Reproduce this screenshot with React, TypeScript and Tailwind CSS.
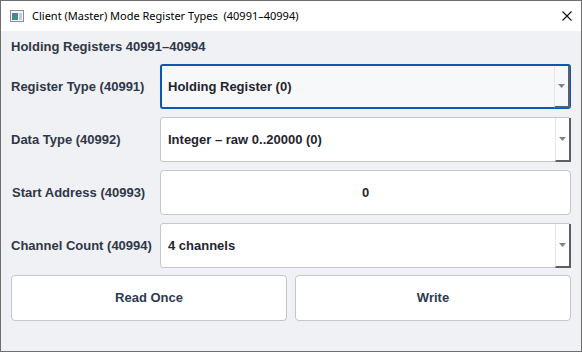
import React from "react";

const labelCls =
  "text-[13px] font-bold text-[#2e3747] whitespace-nowrap flex items-center h-[45px]";

function SelectBox({ value, focused }: { value: string; focused?: boolean }) {
  return (
    <div
      className={
        "h-[45px] flex items-stretch rounded-[3px] " +
        (focused
          ? "border-2 border-[#0b57b8] bg-[#f7f8fa]"
          : "border border-[#c3c6ce] bg-white")
      }
    >
      <div
        className={
          "flex-1 flex items-center text-[13px] font-bold text-[#1f2530] " +
          (focused ? "pl-[6px]" : "pl-[7px]")
        }
      >
        {value}
      </div>
      <div className="w-[16px] flex items-center justify-center border-l border-[#e3e5ea] border-r-2 border-b-2 border-r-[#5c5f66] border-b-[#5c5f66] -mr-px -mb-px">
        <svg width="7" height="4" viewBox="0 0 7 4">
          <path d="M0 0h7L3.5 4z" fill="#7b8391" />
        </svg>
      </div>
    </div>
  );
}

export default function App() {
  return (
    <div
      className="w-[582px] h-[352px] border border-[#6e6e6e] bg-[#f0f1f5] flex flex-col overflow-hidden"
      style={{ fontFamily: '"Liberation Sans", Arial, sans-serif' }}
    >
      {/* Title bar */}
      <div className="h-[30px] bg-white flex items-center shrink-0">
        <svg width="14" height="12" viewBox="0 0 14 12" className="ml-[9px] mr-[8px]">
          <rect x="0.5" y="0.5" width="13" height="11" fill="#f4f4f4" stroke="#8a8f94" />
          <rect x="2" y="3" width="6" height="7" fill="#3f8f8a" />
          <rect x="2" y="3" width="6" height="3" fill="#4a7fb0" />
          <rect x="9" y="3" width="3" height="7" fill="#c9ced3" />
        </svg>
        <span
          className="text-[11px] text-black whitespace-pre"
          style={{ fontFamily: '"Noto Sans", "Open Sans", sans-serif' }}
        >
          Client (Master) Mode Register Types  (40991–40994)
        </span>
        <div className="flex-1" />
        <svg width="10" height="10" viewBox="0 0 10 10" className="mr-[9px]">
          <path d="M0.5 0.5l9 9M9.5 0.5l-9 9" stroke="#111" strokeWidth="1.1" />
        </svg>
      </div>

      {/* Body */}
      <div className="flex-1 px-[10px] pt-[8px]">
        <div className="h-[16px] flex items-center text-[13px] font-bold text-[#2e3747] mb-[9px]">
          Holding Registers 40991–40994
        </div>

        <div className="grid grid-cols-[149px_1fr] gap-y-[8px]">
          <div className={labelCls}>Register Type (40991)</div>
          <SelectBox value="Holding Register (0)" focused />

          <div className={labelCls}>Data Type (40992)</div>
          <SelectBox value="Integer – raw 0..20000 (0)" />

          <div className={labelCls + " pl-[1px]"}>Start Address (40993)</div>
          <div className="h-[45px] rounded-[4px] border border-[#c3c6ce] bg-white flex items-center justify-center text-[13px] font-bold text-[#1f2530]">
            0
          </div>

          <div className={labelCls}>Channel Count (40994)</div>
          <SelectBox value="4 channels" />
        </div>

        <div className="grid grid-cols-2 gap-[8px] mt-[7px]">
          <button className="h-[46px] rounded-[4px] border border-[#c3c6ce] bg-white text-[13px] font-bold text-[#2c3a52]">
            Read Once
          </button>
          <button className="h-[46px] rounded-[4px] border border-[#c3c6ce] bg-white text-[13px] font-bold text-[#2c3a52]">
            Write
          </button>
        </div>
      </div>
    </div>
  );
}
